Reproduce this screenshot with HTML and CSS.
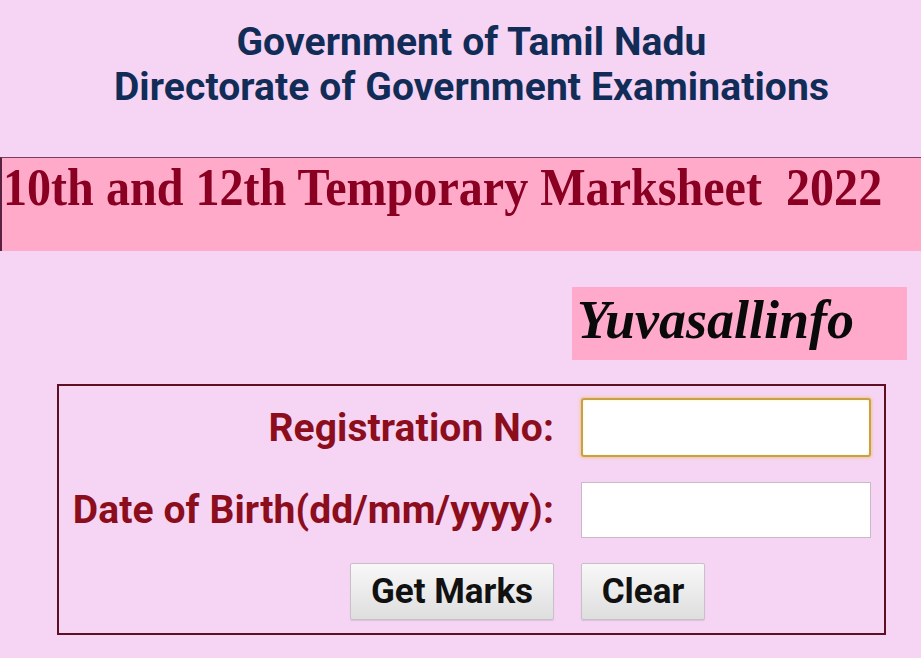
FILE: index.html
```html
<!DOCTYPE html>
<html>
<head>
<meta charset="utf-8">
<link rel="stylesheet" href="styles.css">
</head>
<body>
<div class="page">
  <header class="head">
    <div class="head-line1">Government of Tamil Nadu</div>
    <div class="head-line2">Directorate of Government Examinations</div>
  </header>
  <div class="banner"><span class="banner-text">10th and 12th Temporary Marksheet&nbsp; 2022</span></div>
  <div class="brand-row"><div class="brand">Yuvasallinfo</div></div>
  <div class="form-box">
    <div class="form-grid">
      <label class="lbl">Registration No:</label>
      <div class="inp inp-focus"></div>
      <label class="lbl">Date of Birth(dd/mm/yyyy):</label>
      <div class="inp"></div>
      <div class="btn-cell"><button class="btn btn-get">Get Marks</button></div>
      <div class="btn-cell2"><button class="btn btn-clear">Clear</button></div>
    </div>
  </div>
</div>
</body>
</html>
```
FILE: styles.css
```css
html, body {
  margin: 0;
  padding: 0;
  background: #f6d4f4;
}
.page {
  width: 921px;
  height: 658px;
  overflow: hidden;
  background: #f6d4f4;
}
.head {
  padding-top: 20px;
  padding-left: 22px;
  text-align: center;
  font-family: Roboto, "Liberation Sans", sans-serif;
  font-weight: 700;
  color: #112d57;
  height: 135px;
  box-sizing: border-box;
}
.head-line1,
.head-line2 {
  font-size: 39px;
  line-height: 45px;
  letter-spacing: 0.1px;
  white-space: nowrap;
}
.banner {
  margin-top: 22px;
  height: 94px;
  background: #ffaac8;
  border-top: 1px solid #7a3a6a;
  border-left: 2px solid #5a2040;
  box-sizing: border-box;
  padding-left: 1px;
  padding-top: 1px;
}
.banner-text {
  display: inline-block;
  font-family: "Liberation Serif", "Times New Roman", serif;
  font-weight: 700;
  font-size: 52px;
  line-height: 58px;
  color: #8a0022;
  transform: scaleX(0.925);
  transform-origin: left center;
  white-space: nowrap;
}
.brand-row {
  display: flex;
  justify-content: flex-end;
  padding-right: 14px;
  margin-top: 36px;
}
.brand {
  width: 335px;
  height: 73px;
  background: #ffaacb;
  box-sizing: border-box;
  padding-left: 5px;
  font-family: "Liberation Serif", "Times New Roman", serif;
  font-weight: 700;
  font-style: italic;
  font-size: 54px;
  line-height: 66px;
  color: #0a0a0a;
}
.form-box {
  margin: 24px 35px 0 57px;
  height: 251px;
  border: 2px solid #5e0f24;
  box-sizing: border-box;
  padding-top: 12px;
}
.form-grid {
  display: grid;
  grid-template-columns: 495px 290px;
  column-gap: 27px;
  row-gap: 25px;
  grid-template-rows: 59px 56px 57px;
  align-items: center;
}
.lbl {
  text-align: right;
  font-family: Roboto, "Liberation Sans", sans-serif;
  font-weight: 700;
  font-size: 39px;
  color: #8c0d1c;
  letter-spacing: 0.1px;
  white-space: nowrap;
}
.inp {
  height: 100%;
  background: #fff;
  border: 1px solid #cbb8c8;
  box-sizing: border-box;
}
.inp-focus {
  border: 2px solid #c9a04a;
  border-radius: 3px;
  box-shadow: 0 0 3px 1px #f0c890, inset 0 0 3px #fff2c0;
}
.btn-cell {
  display: flex;
  justify-content: flex-end;
  height: 100%;
}
.btn-cell2 {
  height: 100%;
}
.btn {
  height: 100%;
  font-family: Roboto, "Liberation Sans", sans-serif;
  font-weight: 700;
  font-size: 35px;
  color: #111;
  background: linear-gradient(#f8f8f8, #dedede);
  border: 1px solid #c8c0c8;
  border-radius: 2px;
  padding: 0;
  box-shadow: 0 1px 1px rgba(0,0,0,0.1);
}
.btn-get {
  width: 204px;
}
.btn-clear {
  width: 124px;
}
```
